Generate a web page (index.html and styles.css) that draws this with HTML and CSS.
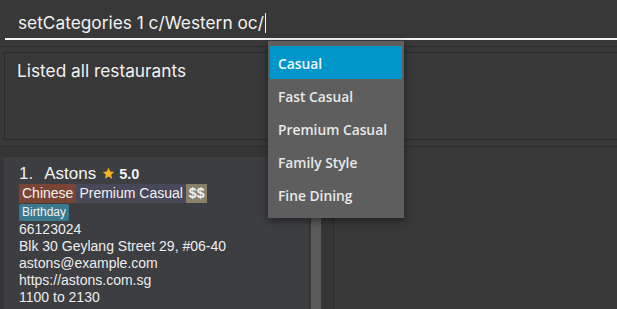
FILE: index.html
```html
<!DOCTYPE html>
<html>
<head>
<meta charset="utf-8">
<link rel="stylesheet" href="styles.css">
</head>
<body>
<div class="app">
  <div class="command">
    <div class="command-input"><span>setCategories 1 c/Western oc/</span><span class="caret"></span></div>
  </div>
  <div class="result-pane">
    <div class="result-box">Listed all restaurants</div>
  </div>
  <div class="main">
    <div class="list-pane">
      <div class="list">
        <div class="card">
          <div class="title"><span class="idx">1.</span><span class="name">Astons</span><svg class="star" viewBox="0 0 24 24" width="13" height="13"><path d="M12 1.5l3.1 6.9 7.4.7-5.6 5 1.7 7.4L12 17.6l-6.6 3.9 1.7-7.4-5.6-5 7.4-.7z" fill="#f2b51c"/></svg><span class="rating">5.0</span></div>
          <div class="tags"><span class="tag cuisine">Chinese</span><span class="tag category">Premium Casual</span><span class="tag price">$$</span></div>
          <div class="tags2"><span class="tag2">Birthday</span></div>
          <div class="line">66123024</div>
          <div class="line">Blk 30 Geylang Street 29, #06-40</div>
          <div class="line">astons@example.com</div>
          <div class="line">https://astons.com.sg</div>
          <div class="line">1100 to 2130</div>
        </div>
      </div>
      <div class="scroll-track"><div class="scroll-thumb"></div></div>
    </div>
    <div class="detail-pane"></div>
  </div>
  <div class="dropdown">
    <div class="item selected">Casual</div>
    <div class="item">Fast Casual</div>
    <div class="item">Premium Casual</div>
    <div class="item">Family Style</div>
    <div class="item">Fine Dining</div>
  </div>
</div>
</body>
</html>
```

FILE: styles.css
```css
html, body {
  margin: 0;
  padding: 0;
  background: #383838;
}
.app {
  position: relative;
  width: 617px;
  height: 309px;
  overflow: hidden;
  font-family: "Inter", "Liberation Sans", sans-serif;
  color: #f2f2f2;
}
.command {
  height: 47px;
  box-sizing: border-box;
  padding: 0 0 0 5px;
  border-bottom: 1px solid #2c2c2c;
}
.command-input {
  height: 40px;
  box-sizing: border-box;
  border-bottom: 2px solid #f4f4f4;
  padding: 12px 0 0 13px;
  font-size: 17.3px;
  line-height: 22px;
  display: flex;
  align-items: flex-start;
}
.caret {
  display: inline-block;
  width: 1px;
  height: 20px;
  background: #f4f4f4;
  margin: 1px 0 0 1px;
}
.result-pane {
  height: 100px;
  box-sizing: border-box;
  padding: 5px 0 6px 4px;
  border-bottom: 1px solid #2c2c2c;
}
.result-box {
  height: 88px;
  box-sizing: border-box;
  border: 1px solid #2a2a2a;
  border-right: none;
  padding: 7px 0 0 12px;
  font-size: 17.3px;
  line-height: 22px;
}
.main {
  display: flex;
  height: 162px;
}
.list-pane {
  width: 334px;
  display: flex;
  background: #353535;
  border-right: 1px solid #2a2a2a;
  padding-top: 10px;
  box-sizing: border-box;
}
.list {
  width: 312px;
  padding-left: 4px;
  box-sizing: border-box;
}
.card {
  width: 305px;
  height: 100%;
  background: #3d3e42;
  box-sizing: border-box;
  padding: 4px 0 0 15px;
  font-family: "Liberation Sans", Arial, sans-serif;
}
.title {
  display: flex;
  align-items: flex-end;
  height: 23px;
  font-size: 17px;
  line-height: 20px;
}
.idx { margin-right: 11px; }
.name { margin-right: 6px; }
.star { margin-right: 4px; margin-bottom: 4px; }
.rating { font-weight: 700; font-size: 14.5px; line-height: 20px; }
.tags {
  display: flex;
  height: 19px;
  font-size: 14px;
  line-height: 19px;
}
.tag { padding: 0 3px; }
.cuisine { background: #7a4436; }
.category { background: #494858; }
.price { background: #8a7f68; font-weight: 700; }
.tags2 {
  display: flex;
  height: 17px;
  margin-top: 1px;
}
.tag2 {
  background: #3b798e;
  font-size: 12px;
  line-height: 16px;
  padding: 0 3px;
  border-radius: 2px;
}
.line {
  font-size: 14px;
  line-height: 17px;
  color: #ededed;
}
.scroll-track {
  width: 22px;
  background: #363636;
  padding-left: 0;
  display: flex;
}
.scroll-thumb {
  width: 10px;
  background: #5b5b5b;
}
.detail-pane {
  flex: 1;
  background: #383838;
}
.dropdown {
  position: absolute;
  left: 268px;
  top: 41px;
  width: 136px;
  height: 177px;
  box-sizing: border-box;
  padding: 5px 2px;
  background: #5e5e5e;
  box-shadow: 0 3px 8px rgba(0,0,0,0.45);
  font-family: "Open Sans", sans-serif;
  font-weight: 600;
  font-size: 13.8px;
  color: #e8e8e8;
}
.item {
  height: 33px;
  box-sizing: border-box;
  padding: 3px 0 0 8px;
  line-height: 30px;
}
.item.selected {
  background: #0096c9;
  color: #f0f8fc;
}
```
